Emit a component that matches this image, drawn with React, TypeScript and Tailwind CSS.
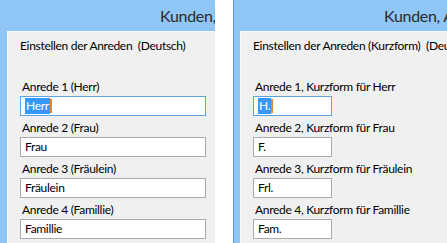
import React from "react";

const font = { fontFamily: 'Lato, "Noto Sans", sans-serif' };

interface Field {
  label: string;
  value: string;
}

const langFields: Field[] = [
  { label: "Anrede 1 (Herr)", value: "Herr" },
  { label: "Anrede 2 (Frau)", value: "Frau" },
  { label: "Anrede 3 (Fräulein)", value: "Fräulein" },
  { label: "Anrede 4 (Famillie)", value: "Famillie" },
];

const shortFields: Field[] = [
  { label: "Anrede 1, Kurzform für Herr", value: "H." },
  { label: "Anrede 2, Kurzform für Frau", value: "F." },
  { label: "Anrede 3, Kurzform für Fräulein", value: "Frl." },
  { label: "Anrede 4, Kurzform für Famillie", value: "Fam." },
];

function TextBox({ value, focused, width }: { value: string; focused: boolean; width: string }) {
  return (
    <div
      className={`${width} h-5 flex items-center pl-[4px] bg-white border text-[12px] leading-4 text-black ${
        focused ? "border-[#5fa2e6]" : "border-[#ababab]"
      }`}
    >
      {focused ? (
        <>
          <span className="bg-[#3399ff] text-white px-px">{value}</span>
          <span className="w-[2px] h-[14px] bg-[#e8862c]" />
        </>
      ) : (
        <span>{value}</span>
      )}
    </div>
  );
}

function Panel({
  heading,
  fields,
  inputWidth,
  titleOffset,
  bordered,
}: {
  heading: string;
  fields: Field[];
  inputWidth: string;
  titleOffset: string;
  bordered: boolean;
}) {
  return (
    <div
      className={`h-full flex flex-col overflow-hidden bg-[#8fc6f6] ${
        bordered ? "flex-1 border-l border-[#5e9fdc] pl-[6px]" : "w-[215px] pl-[7px]"
      }`}
    >
      <div
        className={`h-[31px] shrink-0 flex items-center whitespace-nowrap text-[16px] tracking-[-0.3px] text-[#2b2b2b] ${titleOffset}`}
      >
        Kunden, Anreden
      </div>
      <div className="flex-1 bg-[#f0f0f0] border-l border-t border-[#f9f9f9] pl-[12px] pt-[6px] text-[12px] leading-4 tracking-[-0.3px] text-black whitespace-nowrap">
        <div className="whitespace-pre">{heading}</div>
        <div className="mt-[25px] flex flex-col gap-1">
          {fields.map((f, i) => (
            <div key={i} className="flex flex-col gap-px">
              <div className="pl-[2px]">{f.label}</div>
              <TextBox value={f.value} focused={i === 0} width={inputWidth} />
            </div>
          ))}
        </div>
      </div>
    </div>
  );
}

export default function App() {
  return (
    <div className="w-[447px] h-[243px] flex bg-white overflow-hidden" style={font}>
      <Panel
        heading="Einstellen der Anreden  (Deutsch)"
        fields={langFields}
        inputWidth="w-[186px]"
        titleOffset="pl-[153px]"
        bordered={false}
      />
      <div className="w-[18px] shrink-0" />
      <Panel
        heading="Einstellen der Anreden (Kurzform)  (Deutsch)"
        fields={shortFields}
        inputWidth="w-[79px]"
        titleOffset="pl-[144px]"
        bordered={true}
      />
    </div>
  );
}
